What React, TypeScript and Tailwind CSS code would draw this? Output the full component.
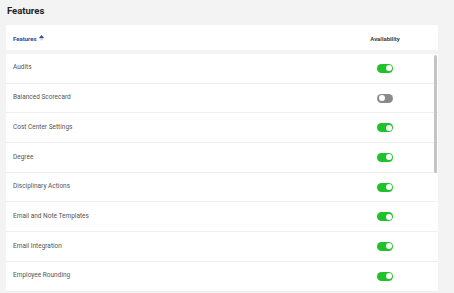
const features = [
  { name: 'Audits', on: true },
  { name: 'Balanced Scorecard', on: false },
  { name: 'Cost Center Settings', on: true },
  { name: 'Degree', on: true },
  { name: 'Disciplinary Actions', on: true },
  { name: 'Email and Note Templates', on: true },
  { name: 'Email Integration', on: true },
  { name: 'Employee Rounding', on: true },
];

function Toggle({ on }: { on: boolean }) {
  return (
    <div
      className={
        on
          ? 'w-[16px] h-[9px] rounded-full bg-[#1fc22a] flex items-center justify-end px-[1.5px]'
          : 'w-[16px] h-[9px] rounded-full bg-[#8a8a8a] flex items-center justify-start px-[1.5px]'
      }
    >
      <div className="w-[6px] h-[6px] rounded-full bg-white" />
    </div>
  );
}

export default function App() {
  return (
    <div className="w-[454px] h-[293px] overflow-hidden bg-[#f3f3f3] font-['Roboto',sans-serif]">
      <h1 className="pl-[7px] pt-[4px] h-[25px] text-[9.5px] font-bold text-[#222]">Features</h1>
      <div className="ml-[6px] w-[432px] h-[25px] bg-white flex items-center">
        <div className="flex-1 pl-[7px] pt-[1px] flex items-center gap-[2px] text-[6px] font-bold text-[#2a4a9e]">
          Features
          <span className="flex flex-col items-center leading-none">
            <svg width="5" height="3" viewBox="0 0 5 3"><path d="M0 3 L2.5 0 L5 3 Z" fill="#2a4a9e" /></svg>
            <svg width="5" height="3" viewBox="0 0 5 3" className="mt-[0.5px]"><path d="M0 0 L2.5 3 L5 0 Z" fill="#c9d3ec" /></svg>
          </span>
        </div>
        <div className="w-[106px] pt-[1px] text-center text-[6px] font-semibold text-[#333]">Availability</div>
      </div>
      <div className="relative ml-[6px] mt-[4px] w-[432px] bg-white">
        {features.map((f) => (
          <div key={f.name} className="h-[29.7px] flex items-center border-b border-[#f0f0f0]">
            <div className="flex-1 pl-[7px] text-[6.5px] text-[#555]">{f.name}</div>
            <div className="w-[106px] flex justify-center">
              <Toggle on={f.on} />
            </div>
          </div>
        ))}
        <div className="absolute right-[1px] top-[1px] w-[3px] h-[118px] rounded-full bg-[#c4c4c4]" />
      </div>
    </div>
  );
}
